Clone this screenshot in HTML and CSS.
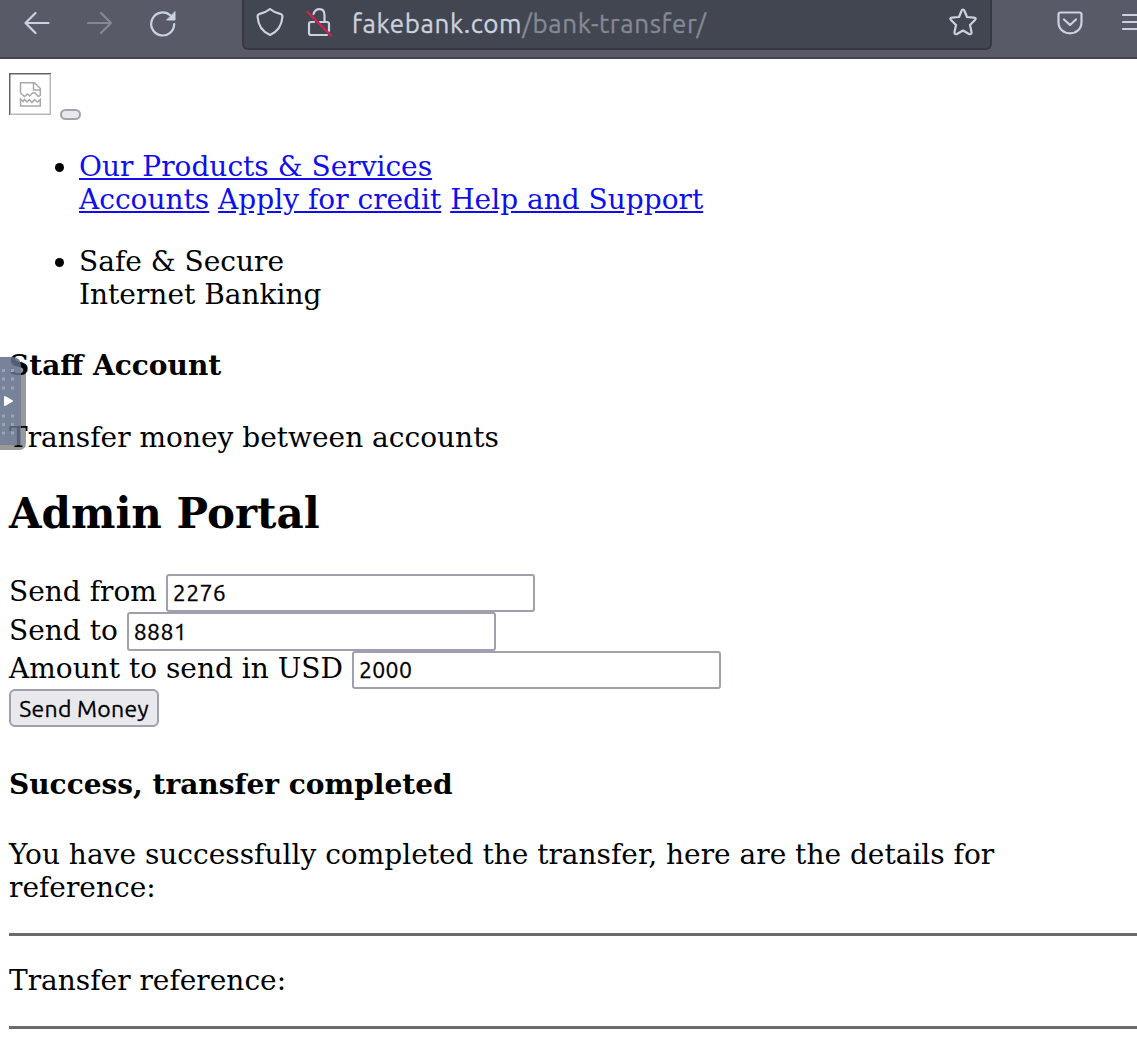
FILE: index.html
```
<!DOCTYPE html>
<html lang="en">
<head>
<meta charset="utf-8">
<title>Bank transfer</title>
<link rel="stylesheet" href="styles.css">
</head>
<body>
<header class="toolbar">
  <svg class="icon back" width="26" height="24" viewBox="0 0 26 24"><path d="M24.500 12H1.500M11.500 2L1.500 12L11.500 22"/></svg>
  <svg class="icon forward" width="26" height="24" viewBox="0 0 26 24"><path d="M1 12H24M14 2L24 12L14 22"/></svg>
  <svg class="icon reload" width="28" height="28" viewBox="0 0 28 28"><path d="M25.200 14A11.500 11.500 0 1 1 21.500 5.500"/><path class="solid" d="M26 2V10H18Z"/></svg>
  <div class="address">
    <svg class="icon shield" width="28" height="30" viewBox="0 0 28 30"><path d="M14 2C10.500 5 6.500 6.500 3 7.200C1.500 7.600 1.500 8.500 1.600 10C2.200 18 6 24.500 14 28C22 24.500 25.800 18 26.400 10C26.500 8.500 26.500 7.600 25 7.200C21.500 6.500 17.500 5 14 2Z"/></svg>
    <svg class="icon lock" width="28" height="30" viewBox="0 0 28 30"><path d="M7.500 7Q9 2.200 13.500 2.200Q18.500 2.200 18.500 8.500V15M14 15H21Q23 15 23 17V24M21 28H5Q3 28 3 26V17Q3 15 5 15H8"/><path class="slash" d="M1.500 5L25 28.500"/></svg>
    <span class="url">fakebank.com<span class="path">/bank-transfer/</span></span>
    <svg class="icon star" width="30" height="30" viewBox="0 0 30 30"><path d="M15 2.500Q16 2.500 16.500 4L19 10L26 10.700Q28.800 11 27 13L22 18L23.500 25Q23.700 28 21 27L15 23.500L9 27Q6.300 28 6.500 25L8 18L3 13Q1.200 11 4 10.700L11 10L13.500 4Q14 2.500 15 2.500Z"/></svg>
  </div>
  <svg class="icon pocket" width="26" height="24" viewBox="0 0 26 24"><path d="M3.500 1.500H22.500Q24.500 1.500 24.500 3.500V11C24.500 18 19.500 22.300 13 22.300S1.500 18 1.500 11V3.500Q1.500 1.500 3.500 1.500ZM7 8.500L13 14L19 8.500"/></svg>
  <svg class="icon menu" width="24" height="20" viewBox="0 0 24 20"><path d="M1 3H24M1 10H24M1 17H24"/></svg>
</header>
<main class="page">
  <div class="brand">
    <svg class="broken" width="42" height="42" viewBox="0 0 42 42"><path class="edge-dark" d="M.75 42V.75H42"/><path class="edge-light" d="M41.300 1V41.300H1"/><path class="sheet" d="M11.500 20V9.700H25.500L31.300 15.500V23M24.500 9.700V17H31.300M11.500 20L15.500 23.500L18.500 21L20.500 23L23.500 20L26.500 20L28.500 23H31.300M11.500 26V33H31.300V26.500L28.500 29L25.500 26.500L23 29.500L20.500 26.500L18 29L15.500 26.500L14 28.500Z"/></svg>
    <button class="toggler" aria-label="Menu"></button>
  </div>
  <ul class="nav">
    <li><a href="#">Our Products &amp; Services</a><br><a href="#">Accounts</a> <a href="#">Apply for credit</a> <a href="#">Help and Support</a></li>
    <li>Safe &amp; Secure<br>Internet Banking</li>
  </ul>
  <h4 class="staff">Staff Account</h4>
  <p class="lead">Transfer money between accounts</p>
  <h2 class="title">Admin Portal</h2>
  <form class="form">
    <div class="row"><label for="from">Send from</label><input id="from" value="2276"></div>
    <div class="row"><label for="to">Send to</label><input id="to" value="8881"></div>
    <div class="row"><label for="amount">Amount to send in USD</label><input id="amount" value="2000"></div>
    <button class="send" type="button">Send Money</button>
  </form>
  <h4 class="success">Success, transfer completed</h4>
  <p class="details">You have successfully completed the transfer, here are the details for<br>reference:</p>
  <hr>
  <p class="reference">Transfer reference:</p>
  <hr>
</main>
<div class="drawer"><svg width="26" height="94" viewBox="0 0 26 94"><path class="shade" d="M21 4Q26 7 26 12V86Q26 93 19 93H0V88H21Z"/><path class="panel" d="M0 0H14Q21 1 21 9V88H0Z"/><path class="dots" d="M2 13.500h3m6 0h3M2 22h3m6 0h3M2 31h3m6 0h3M2 59h3m6 0h3M2 67.500h3m6 0h3M2 76h3m6 0h3"/><path class="arrow" d="M5 40L12 44L5 48Z"/></svg></div>
</body>
</html>
```
FILE: styles.css
```
* { box-sizing: border-box; }
body {
  margin: 0;
  width: 1137px;
  height: 1048px;
  overflow: hidden;
  background: #fff;
  color: #000;
  font: 28.030px/33.4px "DejaVu Serif", serif;
}
.toolbar {
  display: flex;
  align-items: flex-start;
  height: 59px;
  background: #595a67;
  border-bottom: 2px solid #444552;
  overflow: hidden;
}
.icon { flex: none; fill: none; stroke: #cbd1df; stroke-width: 2.2; stroke-linejoin: round; stroke-linecap: round; }
.back { margin: 11px 0 0 24px; }
.forward { margin: 11px 0 0 37px; stroke: #858894; }
.reload { margin: 10px 0 0 36px; }
.solid { fill: #cbd1df; stroke-width: 1; }
.address {
  display: flex;
  flex: none;
  align-items: flex-start;
  width: 750px;
  height: 50px;
  margin-left: 65px;
  padding-left: 12px;
  background: #414651;
  border: 2px solid #363743;
  border-top: 0;
  border-radius: 0 0 6px 6px;
}
.shield { margin-top: 7px; }
.lock { margin: 7px 0 0 22px; }
.slash { stroke: #d2204b; stroke-width: 2.4; }
.url { width: 596px; margin-left: 18px; padding-top: 7px; color: #cbd1df; font: 26px/34px Ubuntu, "Noto Sans", sans-serif; letter-spacing: .61px; -webkit-text-stroke: .3px; white-space: nowrap; }
.path { color: #858995; }
.star { margin: 7px 0 0 0; }
.pocket { margin: 11px 0 0 65px; }
.menu { margin: 12px 0 0 39px; }
.page { padding-left: 9px; }
.brand { display: flex; height: 91px; padding-top: 14px; }
.broken { fill: none; stroke-width: 1.5; }
.edge-dark { stroke: #656565; }
.edge-light { stroke: #b8b8b8; }
.sheet { stroke: #a8a8a8; stroke-width: 1.5; }
.toggler { width: 21px; height: 11px; margin: 36px 0 0 9px; padding: 0; background: #e9e9ed; border: 2px solid #a3a2af; border-radius: 6px; }
.nav { margin: 0; padding-left: 70px; }
.nav li + li { margin-top: 28px; }
.nav a { color: #0f0fee; }
h4, h2, p { margin: 0; }
.staff { margin-top: 37.500px; font-size: 28px; }
.lead { margin-top: 38.500px; }
.title { margin-top: 35px; font-size: 42px; line-height: 50px; }
.form { margin-top: 34.500px; }
.row { display: flex; height: 38.500px; }
.row label { padding-top: 1.500px; margin-right: 9px; white-space: nowrap; }
input { width: 369.500px; height: 38.500px; padding: 0 5px 1px; border: 2px solid #a09faf; border-radius: 3px; background: #fff; color: #000; font: 23px/30px Ubuntu, "Noto Sans", sans-serif; letter-spacing: .35px; -webkit-text-stroke: .3px; }
.send { display: block; width: 150px; height: 38px; padding: 1px 0 0; border: 2px solid #a09faf; border-radius: 6px; background: #e9e9ed; color: #000; font: 23px/30px Ubuntu, "Noto Sans", sans-serif; letter-spacing: .25px; -webkit-text-stroke: .3px; white-space: nowrap; }
.success { margin-top: 40.500px; font-size: 28px; }
.details { margin-top: 36.500px; }
hr { height: 3px; margin: 28.500px 0 0; border: 0; background: #6b6b6b; }
.reference { margin-top: 28px; }
.drawer { position: absolute; left: 0; top: 357px; height: 94px; }
.shade { fill: #000; fill-opacity: .4; }
.panel { fill: #5f6f88; fill-opacity: .86; }
.dots { stroke: #9aa4b5; stroke-width: 3; }
.arrow { fill: #fff; stroke: #fff; stroke-linejoin: round; stroke-width: 2; }
```
